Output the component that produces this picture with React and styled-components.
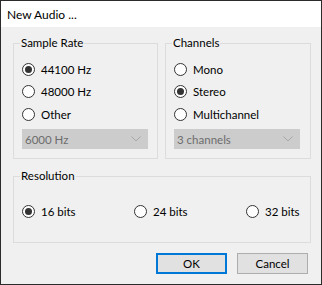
import styled, { createGlobalStyle } from 'styled-components';

const Global = createGlobalStyle`
  html, body { margin: 0; padding: 0; background: #f0f0f0; }
  body { font-family: Lato, "Liberation Sans", sans-serif; font-size: 11.5px; color: #000; }
`;

const Window = styled.div`
  width: 322px;
  height: 285px;
  box-sizing: border-box;
  border: 1px solid #2b2b2b;
  display: flex;
  flex-direction: column;
  background: #f0f0f0;
`;

const TitleBar = styled.div`
  height: 26px;
  background: #fff;
  display: flex;
  align-items: center;
  padding-left: 6px;
  font-size: 12px;
  flex-shrink: 0;
`;

const Body = styled.div`
  flex: 1;
  padding: 8px 10px 0 12px;
  display: flex;
  flex-direction: column;
`;

const TopRow = styled.div`
  display: grid;
  grid-template-columns: 145px 146px;
  column-gap: 7px;
`;

const Group = styled.fieldset`
  margin: 0;
  border: 1px solid #dcdcdc;
  padding: 7px 8px 9px 8px;
  min-width: 0;
  height: ${(p) => p.$h}px;
  box-sizing: border-box;
  display: flex;
  flex-direction: column;
`;

const ResGroup = styled(Group)`
  margin-top: 9px;
  padding-top: 16px;
  display: grid;
  grid-template-columns: 112px 112px 1fr;
  align-content: start;
`;

const Legend = styled.legend`
  padding: 0 1px;
  margin-left: -2px;
  line-height: 16px;
`;

const Radio = styled.label`
  display: flex;
  align-items: center;
  gap: 6px;
  height: 23px;
`;

const Circle = styled.span`
  width: 13px;
  height: 13px;
  box-sizing: border-box;
  border-radius: 50%;
  border: 1px solid #333;
  background: #fff;
  display: grid;
  place-items: center;
  flex-shrink: 0;
  &::after {
    content: '';
    width: 7px;
    height: 7px;
    border-radius: 50%;
    background: ${(p) => (p.$on ? '#333' : 'transparent')};
  }
`;

const Select = styled.div`
  margin-top: 4px;
  height: 20px;
  width: 126px;
  box-sizing: border-box;
  background: #cccccc;
  border: 1px solid #cccccc;
  color: #6d6d6d;
  display: flex;
  align-items: center;
  justify-content: space-between;
  padding: 0 6px 0 2px;
`;

const Buttons = styled.div`
  display: flex;
  justify-content: flex-end;
  gap: 10px;
  margin-top: 10px;
  padding-right: 3px;
`;

const Button = styled.button`
  width: 71px;
  height: 21px;
  box-sizing: border-box;
  font: inherit;
  color: #000;
  background: #e1e1e1;
  border: ${(p) => (p.$primary ? '2px solid #0078d7' : '1px solid #adadad')};
  padding: 0;
`;

const Chevron = () => (
  <svg width="10" height="6" viewBox="0 0 10 6">
    <path d="M0.5 0.5 L5 5 L9.5 0.5" fill="none" stroke="#a8a8a8" strokeWidth="1" />
  </svg>
);

const RadioItem = ({ label, on }) => (
  <Radio>
    <Circle $on={on} />
    <span>{label}</span>
  </Radio>
);

export default function App() {
  return (
    <>
      <Global />
      <Window>
        <TitleBar>New Audio ...</TitleBar>
        <Body>
          <TopRow>
            <Group $h={124}>
              <Legend>Sample Rate</Legend>
              <RadioItem label="44100 Hz" on />
              <RadioItem label="48000 Hz" />
              <RadioItem label="Other" />
              <Select>
                <span>6000 Hz</span>
                <Chevron />
              </Select>
            </Group>
            <Group $h={124}>
              <Legend>Channels</Legend>
              <RadioItem label="Mono" />
              <RadioItem label="Stereo" on />
              <RadioItem label="Multichannel" />
              <Select>
                <span>3 channels</span>
                <Chevron />
              </Select>
            </Group>
          </TopRow>
          <ResGroup $h={75}>
            <Legend>Resolution</Legend>
            <RadioItem label="16 bits" on />
            <RadioItem label="24 bits" />
            <RadioItem label="32 bits" />
          </ResGroup>
          <Buttons>
            <Button $primary>OK</Button>
            <Button>Cancel</Button>
          </Buttons>
        </Body>
      </Window>
    </>
  );
}
